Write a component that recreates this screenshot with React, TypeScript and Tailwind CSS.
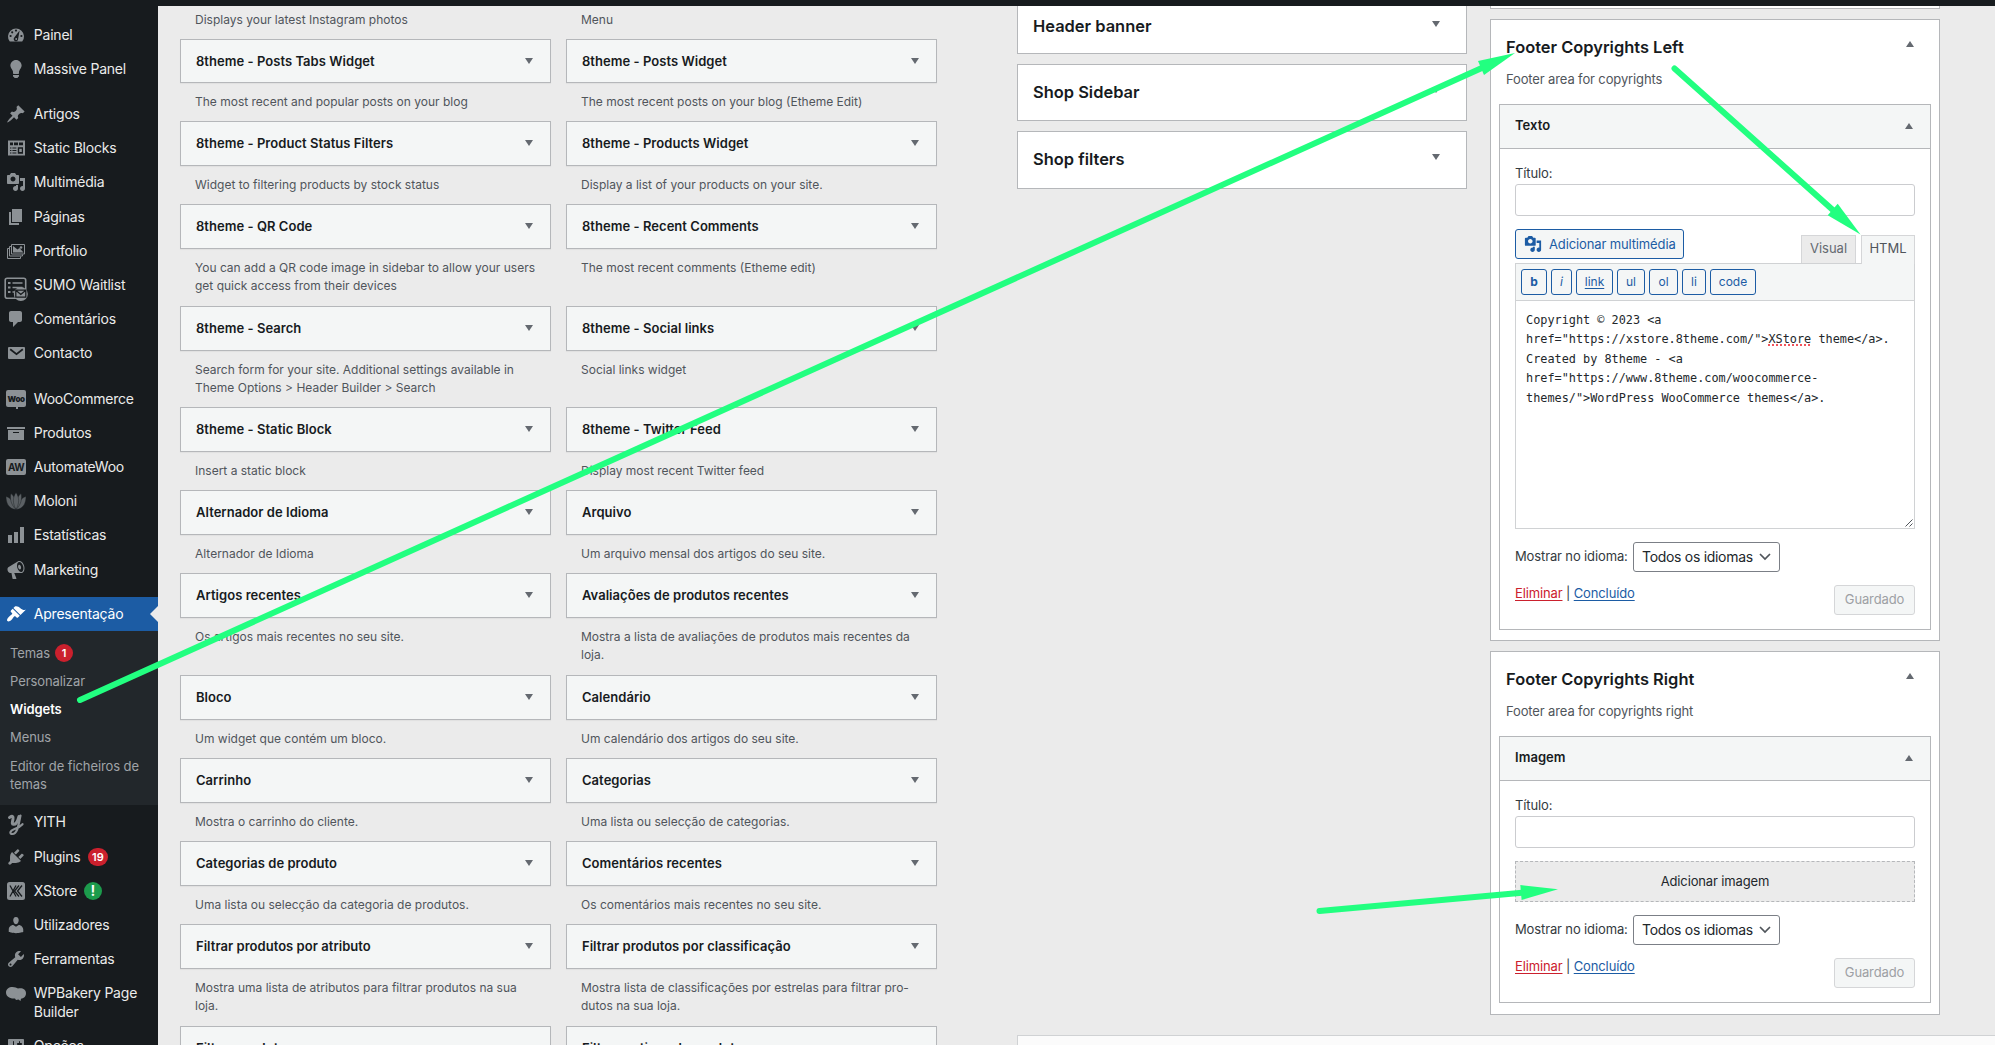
import React from "react";
import clsx from "clsx";

// Menu icon paths, all on a 20x20 grid
const paths = {
  bulb: "M10 1c3.11 0 5.63 2.52 5.63 5.62 0 1.84-2.03 4.58-2.03 4.58-.33.44-.6 1.25-.6 1.8v1c0 .55-.45 1-1 1H8c-.55 0-1-.45-1-1v-1c0-.55-.27-1.36-.6-1.8 0 0-2.02-2.74-2.02-4.58C4.38 3.52 6.89 1 10 1zM7 16.87V16h6v.87c0 .62-.13 1.13-.75 1.13H12c0 .62-.4 1-1.02 1h-2c-.61 0-.98-.38-.98-1h-.25c-.62 0-.75-.51-.75-1.13z",
  pin: "M10.44 3.02l1.82-1.82 6.36 6.35-1.83 1.82c-1.05-.68-2.48-.57-3.41.36l-.75.75c-.92.93-1.04 2.35-.35 3.41l-1.83 1.82-2.41-2.41-2.8 2.79c-.42.42-3.38 2.71-3.8 2.29s1.86-3.39 2.28-3.81l2.79-2.79L4.1 9.36l1.83-1.82c1.05.69 2.48.57 3.4-.36l.75-.75c.93-.92 1.05-2.35.36-3.41z",
  media: "M13 11V4c0-.55-.45-1-1-1h-1.67L9 1H5L3.67 3H2c-.55 0-1 .45-1 1v7c0 .55.45 1 1 1h10c.55 0 1-.45 1-1zM7 4.5c1.38 0 2.5 1.12 2.5 2.5S8.38 9.5 7 9.5 4.5 8.38 4.5 7 5.62 4.5 7 4.5zM14 6h5v10.5c0 1.38-1.12 2.5-2.5 2.5S14 17.88 14 16.5s1.12-2.5 2.5-2.5c.17 0 .34.02.5.05V9h-3V6zm-4 8.05V13h2v3.5c0 1.38-1.12 2.5-2.5 2.5S7 17.88 7 16.5 8.12 14 9.5 14c.17 0 .34.02.5.05z",
  page: "M6 15V2h10v13H6zm-1 1h8v2H3V5h2v11z",
  comment: "M5 2h9c1.1 0 2 .9 2 2v7c0 1.1-.9 2-2 2h-2l-5 5v-5H5c-1.1 0-2-.9-2-2V4c0-1.1.9-2 2-2z",
  archive: "M19 4v2H1V4h18zM2 7h16v10H2V7zm11 3V9H7v1h6z",
  chart: "M18 18V2h-4v16h4zm-6 0V7H8v11h4zm-6 0v-8H2v8h4z",
  megaphone: "M18.15 5.94c.46 1.62.38 3.22-.02 4.48-.42 1.28-1.26 2.18-2.3 2.48-.16.06-.26.06-.4.06-.06.02-.12.02-.18.02-.06.02-.14.02-.22.02h-6.8l2.22 5.5c.02.14-.06.26-.14.34-.08.1-.24.16-.34.16H6.95c-.1 0-.26-.06-.34-.16-.08-.08-.16-.2-.14-.34l-1-5.5H4.25l-.02-.02c-.5.06-1.08-.18-1.54-.62s-.88-1.08-1.06-1.88c-.24-.8-.2-1.56-.02-2.2.18-.62.58-1.08 1.06-1.3l.02-.02 9-5.4c.1-.06.18-.1.24-.16.06-.04.14-.08.24-.12.16-.08.28-.12.5-.18 1.04-.3 2.24.1 3.22.98s1.84 2.24 2.26 3.86zm-2.58 5.98h-.02c.4-.1.74-.34 1.04-.7.58-.7.86-1.76.86-3.04 0-.64-.1-1.3-.28-1.98-.34-1.36-1.02-2.5-1.78-3.24s-1.68-1.1-2.46-.88c-.82.22-1.4.96-1.7 2-.32 1.04-.28 2.36.06 3.72.38 1.36 1 2.5 1.8 3.24.78.74 1.62 1.1 2.48.88zm-2.54-7.08c.22-.04.42-.02.62.04.38.16.76.48 1.02 1s.42 1.2.42 1.78c0 .3-.04.56-.12.8-.18.48-.44.84-.86.94-.34.1-.8-.06-1.14-.4s-.64-.86-.78-1.5c-.18-.62-.12-1.24.02-1.72s.48-.84.82-.94z",
  brush: "M14.48 11.06L7.41 3.99l1.5-1.5c.5-.56 2.3-.47 3.51.32 1.21.8 1.43 1.28 2.91 2.1 1.18.64 2.45 1.26 4.45.85zm-.71.71L6.7 4.7 4.93 6.47c-.39.39-.39 1.02 0 1.41l1.06 1.06c.39.39.39 1.03 0 1.42-.6.6-1.43 1.11-2.21 1.69-.35.26-.7.53-1.01.84C1.43 14.23.4 16.08 1.4 17.07c.99 1 2.84-.03 4.18-1.36.31-.31.58-.66.85-1.02.57-.78 1.08-1.61 1.69-2.21.39-.39 1.02-.39 1.41 0l1.06 1.06c.39.39 1.02.39 1.41 0z",
  plug: "M13.11 4.36L9.87 7.6 8 5.73l3.24-3.24c.35-.34 1.05-.2 1.56.32.52.51.66 1.21.31 1.55zm-8 1.77l.91-1.12 9.01 9.01-1.19.84c-.71.71-2.63 1.16-3.82 1.16H6.14L4.9 17.26c-.59.59-1.54.59-2.12 0-.59-.58-.59-1.53 0-2.12l1.24-1.24v-3.88c0-1.13.4-3.19 1.09-3.89zm7.26 3.97l3.24-3.24c.34-.35 1.04-.21 1.55.31.52.51.66 1.21.31 1.55l-3.24 3.25z",
  user: "M10 9.25c-2.27 0-2.73-3.44-2.73-3.44C7 4.02 7.82 2 9.97 2c2.16 0 2.98 2.02 2.71 3.81 0 0-.41 3.44-2.68 3.44zm0 2.57L12.72 10c2.39 0 4.52 2.33 4.52 4.53v2.49s-3.65 1.13-7.24 1.13c-3.65 0-7.24-1.13-7.24-1.13v-2.49c0-2.25 1.94-4.48 4.47-4.48z",
  wrench: "M16.68 9.77c-1.34 1.34-3.3 1.67-4.95.99l-5.41 6.52c-.99.99-2.59.99-3.58 0s-.99-2.59 0-3.57l6.52-5.42c-.68-1.65-.35-3.61.99-4.95 1.28-1.28 3.12-1.62 4.72-1.06l-2.89 2.89 2.82 2.82 2.86-2.87c.53 1.58.18 3.39-1.08 4.65zM3.81 16.21c.4.39 1.04.39 1.43 0 .4-.4.4-1.04 0-1.43-.39-.4-1.03-.4-1.43 0-.39.39-.39 1.03 0 1.43z",
  sliders: "M18 16V4c0-.55-.45-1-1-1H3c-.55 0-1 .45-1 1v12c0 .55.45 1 1 1h14c.55 0 1-.45 1-1zM8 11h1c.55 0 1 .45 1 1s-.45 1-1 1H8v1.5c0 .28-.22.5-.5.5s-.5-.22-.5-.5V13H6c-.55 0-1-.45-1-1s.45-1 1-1h1V5.5c0-.28.22-.5.5-.5s.5.22.5.5V11zm5-2h-1c-.55 0-1-.45-1-1s.45-1 1-1h1V5.5c0-.28.22-.5.5-.5s.5.22.5.5V7h1c.55 0 1 .45 1 1s-.45 1-1 1h-1v5.500c0 .28-.22.5-.5.5s-.5-.22-.5-.5V9z",
};

const Glyph = ({ d, size = 20 }: { d: string; size?: number }) => (
  <svg width={size} height={size} viewBox="0 0 20 20" fill="currentColor">
    <path d={d} />
  </svg>
);

const Svg = ({ children }: { children: React.ReactNode }) => (
  <svg width="20" height="20" viewBox="0 0 20 20" fill="currentColor" className="overflow-visible">
    {children}
  </svg>
);

const DARK = "#171b1e";

const icons: Record<string, React.ReactNode> = {
  dashboard: (
    <Svg>
      <path d="M3.8 16.6a8 8 0 1 1 12.4 0z" />
      <g fill={DARK}>
        <circle cx="10" cy="5.6" r="1.1" />
        <circle cx="6.2" cy="7.3" r="1.1" />
        <circle cx="4.6" cy="11" r="1.1" />
        <circle cx="15.4" cy="11" r="1.1" />
        <path d="M13.6 5.6 12.1 14a2.2 2.2 0 1 1-3.8-1.4z" />
      </g>
      <circle cx="10.2" cy="14" r="0.9" />
    </Svg>
  ),
  bulb: <Glyph d={paths.bulb} />,
  pin: <Glyph d={paths.pin} />,
  blocks: (
    <Svg>
      <path d="M2 2.500h17v15H2z" />
      <g fill={DARK}>
        <path d="M4 4.600h3v2.600H4zM8 4.600h4v2.600H8zM13 4.600h4v2.600h-4zM4 9.400h1.400v1.200H4zM6.400 9.400h4v1.200h-4zM4 11.900h1.400v1.200H4zM6.400 11.900h4v1.200h-4zM4 14.400h1.400v1.200H4zM6.400 14.400h4v1.200h-4zM11.800 9.200H17v6.600h-5.200z" />
      </g>
      <path d="M13.200 10.800h2.600v3.200h-2.600z" />
    </Svg>
  ),
  media: <Glyph d={paths.media} />,
  page: <Glyph d={paths.page} />,
  portfolio: (
    <Svg>
      <g fill="none" stroke="currentColor" strokeWidth="1">
        <path d="M5.500 3.500h13v9.500h-13z" />
        <path d="M5 5.500H3.500V15h13v-1.500" />
        <path d="M3 7.500H1.500V17.500h13v-2" />
      </g>
      <path d="M7 5l4.500 3.500 2-1.500 4 4.500H7z" />
      <circle cx="15" cy="6.500" r="1.300" />
    </Svg>
  ),
  sumo: (
    <svg width="24" height="24" viewBox="0 0 24 24" className="mt-[7px] shrink-0" fill="none" stroke="currentColor">
      <rect x="1.200" y="1.200" width="20.500" height="20" rx="2" strokeWidth="1.600" />
      <path d="M4 6h2.500M4 10.500h2.500M4 15h2.500" strokeWidth="2.200" />
      <path d="M8.500 6h10M8.500 10.500h10M8.500 15h3" strokeWidth="1.600" />
      <circle cx="16.800" cy="17" r="7" fill="#8c9195" stroke="none" />
      <path d="M11.800 13.200h10v7h-10zM12.100 13.500l4.700 4 4.700-4" stroke={DARK} strokeWidth="1.300" />
    </svg>
  ),
  comment: <Glyph d={paths.comment} />,
  mail: (
    <Svg>
      <path d="M3 4h15a1 1 0 0 1 1 1v10a1 1 0 0 1-1 1H3a1 1 0 0 1-1-1V5a1 1 0 0 1 1-1z" />
      <path d="M4.200 6.200l6.300 5 6.300-5" fill="none" stroke={DARK} strokeWidth="1.800" />
    </Svg>
  ),
  woo: (
    <div className="relative flex h-[17px] w-[20px] items-center justify-center rounded-[2px] bg-current">
      <span className="text-[8px] font-black leading-none tracking-[-0.500px] text-[#171b1e]">Woo</span>
      <span className="absolute -bottom-[2px] left-[10px] h-[2px] w-[2px] bg-current" />
    </div>
  ),
  archive: <Glyph d={paths.archive} />,
  aw: (
    <div className="flex h-[16px] w-[20px] items-center justify-center rounded-[2px] bg-current">
      <span className="text-[10px] font-bold leading-none tracking-[-0.600px] text-[#171b1e]">AW</span>
    </div>
  ),
  moloni: (
    <Svg>
      <g fill="#5b6064" stroke={DARK} strokeWidth="0.400">
        <path d="M10 18.500C2 18 0 11 0 5.500c4 1 8 5 10 13z" />
        <path d="M10 18.500c8-.5 10-7.500 10-13-4 1-8 5-10 13z" />
        <path d="M10 18.500C5 14 3.500 7 5 2.500c4 3 5.500 9 5 16z" />
        <path d="M10 18.500c5-4.500 6.500-11.500 5-16-4 3-5.500 9-5 16z" />
        <path d="M10 18.500c-3.500-6-3.500-12 0-17 3.500 5 3.500 11 0 17z" />
      </g>
    </Svg>
  ),
  chart: <Glyph d={paths.chart} />,
  megaphone: <Glyph d={paths.megaphone} />,
  brush: <Glyph d={paths.brush} />,
  yith: (
    <Svg>
      <g transform="translate(0 2)" fill="none" stroke="currentColor" strokeLinecap="round">
        <path d="M3.500 2.500c2.500-2.500 4-1 3.500 1.500-.5 3-1.500 5 .5 5.300 3 .4 4.500-4 5.500-7.800" strokeWidth="3" />
        <path d="M14.500 0.500C12.500 10 11.500 19 6.500 19c-3.500 0-2.500-3.500 1.500-4.800 4-1.200 6.500-2.700 8.500-5" strokeWidth="2.200" />
      </g>
    </Svg>
  ),
  plug: <Glyph d={paths.plug} />,
  xstore: (
    <Svg>
      <rect x="1" y="1" width="18" height="18" rx="2.500" />
      <path d="M4 4.500l6 11M10 4.500l-6 11M16 4.500l-4.500 5.500 4.500 5.500M13 4.500L8.500 10l4.500 5.500" fill="none" stroke={DARK} strokeWidth="1.300" />
    </Svg>
  ),
  user: <Glyph d={paths.user} />,
  wrench: <Glyph d={paths.wrench} />,
  bakery: (
    <Svg>
      <path d="M0 8.500C0 5 3 3 6.500 3c2.500 0 4 .8 5.500 1.600 4-1 8 .6 8 4.600 0 3.600-2.500 5.300-5 5.500l-.5 2.300-2-1.500-2.500.5-1-1.600C4 15 0 12.500 0 8.500z" />
    </Svg>
  ),
  sliders: <Glyph d={paths.sliders} />,
};

type MenuEntry = { icon: string; label: string; gap?: boolean; badge?: string; tone?: "red" | "green" };

const menuTop: MenuEntry[] = [
  { icon: "dashboard", label: "Painel" },
  { icon: "bulb", label: "Massive Panel" },
  { icon: "pin", label: "Artigos", gap: true },
  { icon: "blocks", label: "Static Blocks" },
  { icon: "media", label: "Multimédia" },
  { icon: "page", label: "Páginas" },
  { icon: "portfolio", label: "Portfolio" },
  { icon: "sumo", label: "SUMO Waitlist" },
  { icon: "comment", label: "Comentários" },
  { icon: "mail", label: "Contacto" },
  { icon: "woo", label: "WooCommerce", gap: true },
  { icon: "archive", label: "Produtos" },
  { icon: "aw", label: "AutomateWoo" },
  { icon: "moloni", label: "Moloni" },
  { icon: "chart", label: "Estatísticas" },
  { icon: "megaphone", label: "Marketing" },
];

const menuBottom: MenuEntry[] = [
  { icon: "yith", label: "YITH" },
  { icon: "plug", label: "Plugins", badge: "19", tone: "red" },
  { icon: "xstore", label: "XStore", badge: "!", tone: "green" },
  { icon: "user", label: "Utilizadores" },
  { icon: "wrench", label: "Ferramentas" },
  { icon: "bakery", label: "WPBakery Page Builder" },
  { icon: "sliders", label: "Opções" },
];

const submenu = ["Temas", "Personalizar", "Widgets", "Menus", "Editor de ficheiros de temas"];

// rows of the available widgets list, [title, description] for each column
const rows: { h: string; cells: [string, string][] }[] = [
  { h: "h-[82px]", cells: [["8theme - Posts Tabs Widget", "The most recent and popular posts on your blog"], ["8theme - Posts Widget", "The most recent posts on your blog (Etheme Edit)"]] },
  { h: "h-[83px]", cells: [["8theme - Product Status Filters", "Widget to filtering products by stock status"], ["8theme - Products Widget", "Display a list of your products on your site."]] },
  { h: "h-[102px]", cells: [["8theme - QR Code", "You can add a QR code image in sidebar to allow your users\nget quick access from their devices"], ["8theme - Recent Comments", "The most recent comments (Etheme edit)"]] },
  { h: "h-[101px]", cells: [["8theme - Search", "Search form for your site. Additional settings available in\nTheme Options > Header Builder > Search"], ["8theme - Social links", "Social links widget"]] },
  { h: "h-[83px]", cells: [["8theme - Static Block", "Insert a static block"], ["8theme - Twitter Feed", "Display most recent Twitter feed"]] },
  { h: "h-[83px]", cells: [["Alternador de Idioma", "Alternador de Idioma"], ["Arquivo", "Um arquivo mensal dos artigos do seu site."]] },
  { h: "h-[102px]", cells: [["Artigos recentes", "Os artigos mais recentes no seu site."], ["Avaliações de produtos recentes", "Mostra a lista de avaliações de produtos mais recentes da\nloja."]] },
  { h: "h-[83px]", cells: [["Bloco", "Um widget que contém um bloco."], ["Calendário", "Um calendário dos artigos do seu site."]] },
  { h: "h-[83px]", cells: [["Carrinho", "Mostra o carrinho do cliente."], ["Categorias", "Uma lista ou selecção de categorias."]] },
  { h: "h-[83px]", cells: [["Categorias de produto", "Uma lista ou selecção da categoria de produtos."], ["Comentários recentes", "Os comentários mais recentes no seu site."]] },
  { h: "h-[102px]", cells: [["Filtrar produtos por atributo", "Mostra uma lista de atributos para filtrar produtos na sua\nloja."], ["Filtrar produtos por classificação", "Mostra lista de classificações por estrelas para filtrar pro-\ndutos na sua loja."]] },
  { h: "h-[83px]", cells: [["Filtrar produtos por preço", ""], ["Filtros activos de produtos", ""]] },
];

const Triangle = ({ up }: { up?: boolean }) => (
  <svg width="8" height="6" viewBox="0 0 8 6" fill="#646970" className="shrink-0">
    <path d={up ? "M4 0l4 6H0z" : "M0 0h8L4 6z"} />
  </svg>
);

const MenuItem = ({ item }: { item: MenuEntry }) => (
  <li className={clsx("flex", item.gap && "mt-[11px]")}>
    <div className="flex h-[34.200px] w-8 shrink-0 items-center justify-center text-[#8c9195]">{icons[item.icon]}</div>
    <div className="flex-1 py-[8px] pl-[1.800px] text-[14px] leading-[18.200px] tracking-[-0.220px] text-[#ebebeb]">
      {item.label}
      {item.badge && (
        <span
          className={clsx(
            "ml-[7px] inline-flex h-[18px] min-w-[18px] items-center justify-center rounded-full px-[4.500px] align-top font-semibold tracking-normal text-white",
            item.tone === "red" ? "bg-[#cb202d] text-[11px]" : "bg-[#1c9b4c] text-[15px]"
          )}
        >
          {item.badge}
        </span>
      )}
    </div>
  </li>
);

const Sidebar = () => (
  <nav className="w-[158px] shrink-0 bg-[#171b1e] pt-[11.500px]">
    <ul>
      {menuTop.map((item) => (
        <MenuItem key={item.label} item={item} />
      ))}
      <li className="mt-[10.500px]">
        <div className="relative flex h-[34.200px] bg-[#1c5ca4] text-white">
          <div className="flex w-8 items-center justify-center">{icons.brush}</div>
          <div className="py-[8px] pl-[1.800px] text-[14px] leading-[18.200px] tracking-[-0.220px]">Apresentação</div>
          <svg className="absolute right-0 top-[9px]" width="8" height="16" viewBox="0 0 8 16" fill="#ebebeb">
            <path d="M8 0v16L0 8z" />
          </svg>
        </div>
        <ul className="bg-[#22272b] py-[7.400px]">
          {submenu.map((label) => (
            <li
              key={label}
              className={clsx(
                "py-[5px] pl-[10px] pr-3 text-[13px] leading-[18.200px] tracking-[-0.090px]",
                label === "Widgets" ? "font-semibold text-white" : "text-[#a0a4a8]"
              )}
            >
              {label}
              {label === "Temas" && (
                <span className="ml-[5px] inline-flex h-[18px] w-[18px] items-center justify-center rounded-full bg-[#cb202d] align-top text-[11px] font-semibold text-white">
                  1
                </span>
              )}
            </li>
          ))}
        </ul>
      </li>
      {menuBottom.map((item) => (
        <MenuItem key={item.label} item={item} />
      ))}
    </ul>
  </nav>
);

const AvailableWidgets = () => (
  <div className="w-[757px] shrink-0 text-[12px] leading-[18px] text-[#50555b]">
    <div className="grid h-[33px] grid-cols-2 gap-[15px] pt-[5px]">
      <p className="pl-[15px]">Displays your latest Instagram photos</p>
      <p className="pl-[15px]">Menu</p>
    </div>
    {rows.map((row, i) => (
      <div key={row.cells[0][0]} className={clsx("grid grid-cols-2 gap-[15px]", row.h)}>
        {row.cells.map(([title, text]) => (
          <div key={title}>
            <div
              className={clsx(
                "flex items-center justify-between border border-[#b5b7ba] bg-[#f4f6f6] pb-px pl-[15px] pr-[17px] shadow-[0_1px_1px_rgba(0,0,0,0.04)]",
                i === 0 ? "h-[44px]" : "h-[45px]"
              )}
            >
              <h3 className="text-[13px] font-semibold tracking-[0.040px] text-[#171b1e]">{title}</h3>
              <Triangle />
            </div>
            <p className="whitespace-pre pl-[15px] pt-[9.500px]">{text}</p>
          </div>
        ))}
      </div>
    ))}
  </div>
);

const ClosedArea = ({ title, className }: { title: string; className: string }) => (
  <div className={clsx("flex justify-between border border-[#b5b7ba] bg-white pl-[15px] pr-[26px]", className)}>
    <h2 className="text-[16.450px] font-semibold leading-[24px] text-[#171b1e]">{title}</h2>
    <span className="pt-[7px]">
      <Triangle />
    </span>
  </div>
);

const TitleField = () => (
  <label className="block">
    <span className="block h-[20px] leading-[18px]">Título:</span>
    <input className="block h-[32px] w-full rounded-[3px] border border-[#cbcccf] bg-white" />
  </label>
);

const WidgetFooter = () => (
  <>
    <div className="flex h-[30px] items-center">
      <span className="w-[118px] pb-px">Mostrar no idioma:</span>
      <button className="flex h-[30px] w-[147px] items-center justify-between whitespace-nowrap rounded-[3px] border border-[#7b7f86] bg-white pb-px pl-2 pr-[8px] text-[14px] tracking-[-0.300px] text-[#22272b]">
        Todos os idiomas
        <svg width="12" height="8" viewBox="0 0 12 8" fill="none" stroke="#50555b" strokeWidth="1.700">
          <path d="M1 1l5 5 5-5" />
        </svg>
      </button>
    </div>
    <div className="mt-[13px] flex justify-between">
      <p className="h-[16px] leading-[16px]">
        <a className="text-[#cb202d] underline underline-offset-2">Eliminar</a> | <a className="text-[#1c5ca4] underline underline-offset-2">Concluído</a>
      </p>
      <button className="h-[30px] w-[81px] rounded-[3px] border border-[#d5d6d8] bg-[#f4f6f6] text-[#9da0a4]">Guardado</button>
    </div>
  </>
);

type AreaProps = { title: string; desc: string; widget: string; className: string; children: React.ReactNode };

const OpenArea = ({ title, desc, widget, className, children }: AreaProps) => (
  <section className={clsx("border border-[#b5b7ba] bg-white px-[8px] pt-[14.500px] tracking-[-0.130px]", className)}>
    <div className="flex justify-between pl-[7px] pr-[17px]">
      <h2 className="text-[16.450px] font-semibold leading-[24px] tracking-normal text-[#171b1e]">{title}</h2>
      <span className="pt-[6.500px]">
        <Triangle up />
      </span>
    </div>
    <p className="pl-[7px] pt-[11.500px] leading-[18px] text-[#50555b]">{desc}</p>
    <div className="mt-[16px] border border-[#b5b7ba]">
      <div className="flex h-[44px] items-center justify-between border-b border-[#b5b7ba] bg-[#f4f6f6] pb-px pl-[15px] pr-[17px]">
        <h3 className="text-[13px] font-semibold tracking-[0.040px] text-[#171b1e]">{widget}</h3>
        <Triangle up />
      </div>
      <div className="px-[15px] pb-[14px] pt-[15px]">{children}</div>
    </div>
  </section>
);

const quicktags = [
  { label: "b", cls: "w-[26px] font-bold" },
  { label: "i", cls: "w-[21px] italic" },
  { label: "link", cls: "w-[37px] underline underline-offset-2" },
  { label: "ul", cls: "w-[28px]" },
  { label: "ol", cls: "w-[29px]" },
  { label: "li", cls: "w-[24px]" },
  { label: "code", cls: "w-[46px]" },
];

const TextEditor = () => (
  <div className="mt-[13px]">
    <div className="flex h-[34px] justify-between">
      <button className="flex h-[30px] w-[169px] items-center gap-[7px] whitespace-nowrap rounded-[3px] border border-[#1c5ca4] bg-[#f4f6f6] pl-[8px] text-[13px] text-[#1c5ca4]">
        <Glyph d={paths.media} size={18} />
        <span className="pt-px">Adicionar multimédia</span>
      </button>
      <div className="flex gap-[5px] pt-[6px] text-[13px] tracking-normal">
        <div className="flex h-[28px] w-[55px] items-center justify-center border border-b-0 border-[#d5d6d8] bg-[#ebebeb] pb-[2px] text-[#646970]">Visual</div>
        <div className="relative z-10 flex h-[29px] w-[54px] items-center justify-center border border-b-0 border-[#d5d6d8] bg-[#f4f6f6] pb-[3px] text-[#50555b]">HTML</div>
      </div>
    </div>
    <div className="border border-[#d0d2d4]">
      <div className="flex h-[37px] gap-[4px] border-b border-[#d0d2d4] bg-[#f4f6f6] px-[5px] pt-[5px]">
        {quicktags.map((q) => (
          <button key={q.label} className={clsx("h-[26px] rounded-[3px] border border-[#1c5ca4] text-[12px] tracking-normal text-[#1c5ca4]", q.cls)}>
            {q.label}
          </button>
        ))}
      </div>
      <div className="relative h-[227px] whitespace-pre pl-[10px] pt-[9.500px] font-['DejaVu_Sans_Mono',monospace] text-[11.850px] leading-[19.500px] tracking-normal text-[#22272b]">
        {'Copyright © 2023 <a\nhref="https://xstore.8theme.com/">'}
        <span className="underline decoration-[#f0545c] decoration-dotted decoration-2">XStore</span>
        {' theme</a>.\nCreated by 8theme - <a\nhref="https://www.8theme.com/woocommerce-\nthemes/">WordPress WooCommerce themes</a>.'}
        <svg className="absolute bottom-[1px] right-[1px]" width="8" height="8" viewBox="0 0 8 8" stroke="#50555b">
          <path d="M0.500 7.500l7-7M4.500 7.500l3-3" />
        </svg>
      </div>
    </div>
  </div>
);

const GREEN = "#22ff80";

// green arrows drawn on top of the screen
const Arrows = () => (
  <svg className="pointer-events-none absolute left-0 top-0 z-20" width="1995" height="1045" fill={GREEN} stroke="none">
    <g stroke={GREEN} strokeWidth="6" strokeLinecap="round">
      <path d="M80 700L1484 67" />
      <path d="M1674.500 68.500L1834 211" />
      <path d="M1319.500 911L1522 892.700" />
    </g>
    <path d="M1515 53L1478 61l6 14z" />
    <path d="M1860.500 234.500L1837.700 203.700l-10 11.600z" />
    <path d="M1558 889.300L1520.300 885l1.300 15z" />
  </svg>
);

export default function App() {
  return (
    <div className="relative flex h-[1045px] w-[1995px] flex-col overflow-hidden bg-[#ebebeb] font-['Inter','Liberation_Sans',sans-serif] text-[13px] text-[#343a40]">
      <header className="h-[6px] shrink-0 bg-[#171b1e]" />
      <div className="flex h-[1039px] overflow-hidden">
        <Sidebar />
        <main className="flex flex-1 gap-[80px] pl-[22px]">
          <AvailableWidgets />
          <div className="flex-1">
            <div className="flex h-[1029px] gap-[23px]">
              <div className="w-[450px]">
                <ClosedArea title="Header banner" className="h-[48px] border-t-0 pt-[8px]" />
                <ClosedArea title="Shop Sidebar" className="mt-[10px] h-[57px] pt-[15px]" />
                <ClosedArea title="Shop filters" className="mt-[10px] h-[58px] pt-[15px]" />
              </div>
              <div className="w-[450px]">
                <div className="h-[3px] border border-t-0 border-[#b5b7ba] bg-white" />
                <OpenArea title="Footer Copyrights Left" desc="Footer area for copyrights" widget="Texto" className="mt-[10px] h-[622px]">
                  <TitleField />
                  <TextEditor />
                  <div className="mt-[13px]">
                    <WidgetFooter />
                  </div>
                </OpenArea>
                <OpenArea title="Footer Copyrights Right" desc="Footer area for copyrights right" widget="Imagem" className="mt-[10px] h-[364px]">
                  <TitleField />
                  <div className="my-[13px] flex h-[41px] items-center justify-center border border-dashed border-[#b5b7ba] bg-[#ebebeb] text-[#22272b]">
                    Adicionar imagem
                  </div>
                  <WidgetFooter />
                </OpenArea>
              </div>
            </div>
            <div className="h-[10px] border-l border-t border-[#d0d2d4] bg-[#fbfbfb]" />
          </div>
        </main>
      </div>
      <Arrows />
    </div>
  );
}
